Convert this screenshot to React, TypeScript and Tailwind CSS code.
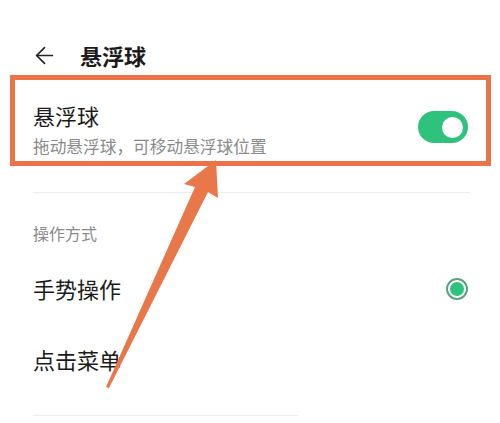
import { ArrowLeft } from 'lucide-react'

const font = { fontFamily: '"Noto Sans CJK SC", "Noto Sans", sans-serif' }

function Toggle() {
  return (
    <div className="mt-[11px] flex h-[32px] w-[50px] items-center justify-end rounded-full bg-[#2ec27c] pr-[5px]">
      <div className="h-[21px] w-[21px] rounded-full bg-white" />
    </div>
  )
}

function Radio() {
  return (
    <div className="flex h-[22px] w-[22px] items-center justify-center rounded-full border-[2px] border-[#5aa37e] bg-white">
      <div className="h-[14px] w-[14px] rounded-full bg-[#2ec27c]" />
    </div>
  )
}

export default function App() {
  return (
    <div className="relative h-[423px] w-[500px] overflow-hidden bg-white text-[#1b1b1b]" style={font}>
      <header className="mt-[40px] flex h-[30px] items-center pl-[31px]">
        <ArrowLeft className="h-[27px] w-[27px] text-[#222]" strokeWidth={1.5} />
        <h1 className="ml-[22px] text-[22px] font-bold leading-none">悬浮球</h1>
      </header>

      <div className="mx-[10px] mt-[5px] flex h-[91px] w-[481px] items-start justify-between border-[5px] border-[#eb7347] pl-[18px] pr-[18px] pt-[20px]">
        <div className="flex flex-col">
          <span className="text-[22px] leading-[30px]">悬浮球</span>
          <span className="mt-[5px] text-[16.7px] leading-[22px] text-[#8a8a8a]">拖动悬浮球，可移动悬浮球位置</span>
        </div>
        <Toggle />
      </div>

      <div className="ml-[33px] mt-[26px] h-px w-[437px] bg-[#ececec]" />

      <div className="ml-[33px] mt-[30px] text-[16px] leading-[20px] text-[#8a8a8a]">操作方式</div>

      <div className="mt-[10px] flex flex-col">
        <div className="flex h-[71px] items-center justify-between pl-[33px] pr-[32px]">
          <span className="text-[22px]">手势操作</span>
          <Radio />
        </div>
        <div className="flex h-[71px] items-center pl-[33px]">
          <span className="text-[22px]">点击菜单</span>
        </div>
      </div>

      <div className="ml-[33px] mt-[20px] h-px w-[265px] bg-[#ececec]" />

      <svg className="pointer-events-none absolute left-0 top-0" width="500" height="423" viewBox="0 0 500 423">
        <polygon
          points="216,160 218,198 208,192 109,388 106,387 195,187 184,184"
          fill="#e8784a"
        />
      </svg>
    </div>
  )
}
